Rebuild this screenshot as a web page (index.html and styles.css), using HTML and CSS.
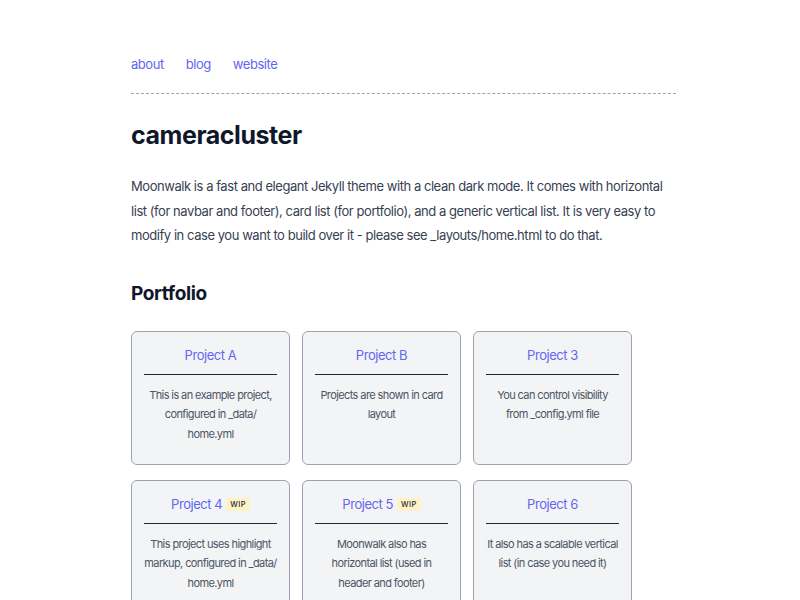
FILE: index.html
```html
<!DOCTYPE html>
<html lang="en">
<head>
<meta charset="utf-8">
<title>cameracluster</title>
<link rel="stylesheet" href="styles.css">
</head>
<body>
<div class="page">
  <nav class="nav">
    <a href="#">about</a>
    <a href="#">blog</a>
    <a href="#">website</a>
  </nav>
  <hr class="rule">
  <h1 class="title">cameracluster</h1>
  <p class="intro">Moonwalk is a fast and elegant Jekyll theme with a clean dark mode. It comes with horizontal list (for navbar and footer), card list (for portfolio), and a generic vertical list. It is very easy to modify in case you want to build over it - please see _layouts/home.html to do that.</p>
  <h2 class="section">Portfolio</h2>
  <div class="cards">
    <div class="card">
      <div class="card-title"><a href="#">Project A</a></div>
      <div class="card-text">This is an example project, configured in _data/ home.yml</div>
    </div>
    <div class="card">
      <div class="card-title"><a href="#">Project B</a></div>
      <div class="card-text">Projects are shown in card layout</div>
    </div>
    <div class="card">
      <div class="card-title"><a href="#">Project 3</a></div>
      <div class="card-text">You can control visibility from _config.yml file</div>
    </div>
    <div class="card">
      <div class="card-title"><a href="#">Project 4</a><span class="badge">WIP</span></div>
      <div class="card-text">This project uses highlight markup, configured in _data/ home.yml</div>
    </div>
    <div class="card">
      <div class="card-title"><a href="#">Project 5</a><span class="badge">WIP</span></div>
      <div class="card-text">Moonwalk also has horizontal list (used in header and footer)</div>
    </div>
    <div class="card">
      <div class="card-title"><a href="#">Project 6</a></div>
      <div class="card-text">It also has a scalable vertical list (in case you need it)</div>
    </div>
  </div>
</div>
</body>
</html>
```
FILE: styles.css
```css
html, body { margin: 0; padding: 0; background: #fff; }
body { font-family: Inter, "Noto Sans", sans-serif; color: #1f2937; letter-spacing: -0.45px; }
.page { width: 545px; margin: 0 0 0 131px; padding-top: 54px; }
.nav { display: flex; gap: 22px; font-size: 13px; line-height: 20px; }
.nav a { color: #6366f1; text-decoration: none; }
.rule { border: 0; border-top: 1px dashed #9ca3af; margin: 19px 0 0 0; height: 0; }
.title { font-size: 25px; font-weight: 700; color: #0f172a; margin: 25px 0 0 0; line-height: 32px; letter-spacing: -0.45px; }
.intro { font-size: 13px; line-height: 24.5px; color: #374151; margin: 23px 0 0 0; }
.section { font-size: 19px; font-weight: 700; color: #0f172a; margin: 33px 0 0 0; line-height: 26px; letter-spacing: -0.35px; }
.cards { display: grid; grid-template-columns: repeat(3, 159px); column-gap: 12px; row-gap: 15px; margin-top: 24px; }
.card { background: #f3f4f6; border: 1px solid #9ca3af; border-radius: 6px; padding: 12px 12px 0 12px; height: 134px; box-sizing: border-box; }
.card-title { text-align: center; font-size: 13px; line-height: 22px; padding-bottom: 8px; border-bottom: 1.5px solid #1f2937; display: flex; justify-content: center; align-items: center; gap: 4px; }
.card-title a { color: #6366f1; text-decoration: none; }
.badge { background: #fef3c7; color: #1f2937; font-size: 7.5px; font-weight: 500; letter-spacing: 0.4px; padding: 2px 4px; line-height: 9px; margin-top: 2px; }
.card-text { text-align: center; font-size: 11px; line-height: 19.5px; color: #4b5563; padding-top: 11px; letter-spacing: -0.6px; margin: 0 -1px; }
```
